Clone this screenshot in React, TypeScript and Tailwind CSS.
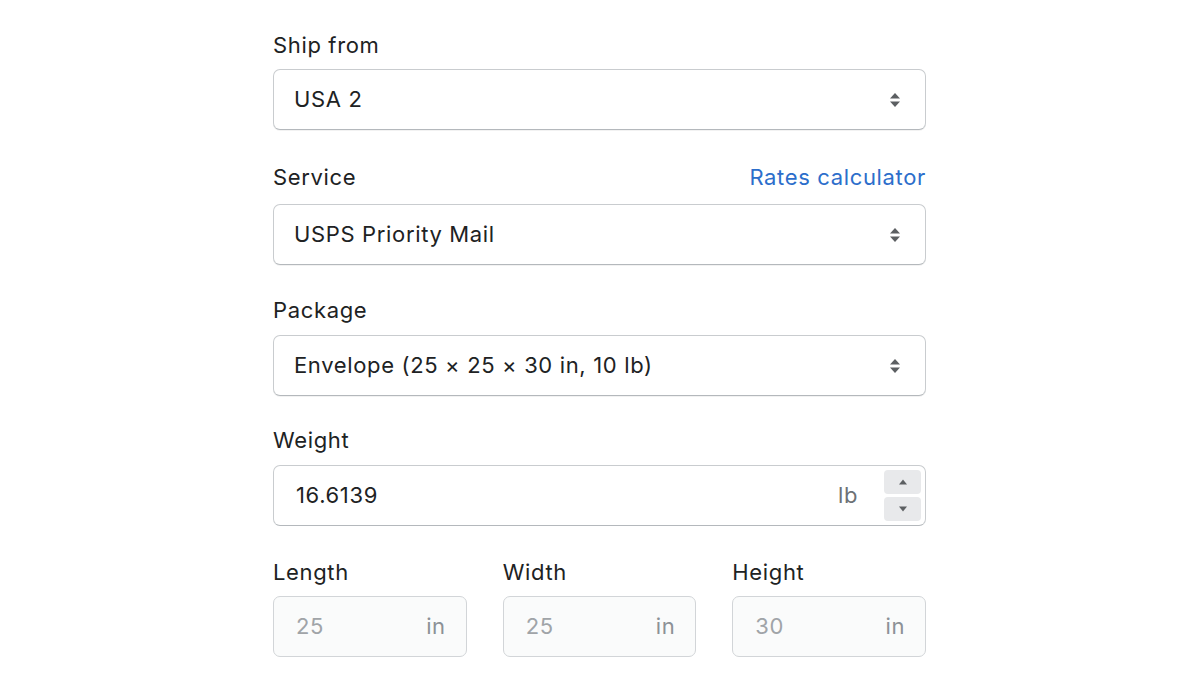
import React from 'react';

const font = { fontFamily: 'Inter, "Noto Sans", sans-serif' };

function SelectArrows() {
  return (
    <svg width="12" height="18" viewBox="0 0 12 18" className="shrink-0">
      <path d="M6 2 L11 7.5 L1 7.5 Z" fill="#5c5f62" />
      <path d="M6 16 L11 10.5 L1 10.5 Z" fill="#5c5f62" />
    </svg>
  );
}

function Label({ children }: { children: React.ReactNode }) {
  return <div className="text-[22px] leading-[30px] tracking-[0.65px] text-[#202223]">{children}</div>;
}

function Select({ value, className }: { value: string; className: string }) {
  return (
    <div className={`${className} h-[61px] rounded-[7px] border border-[#c9cccf] border-b-[#b4b8bc] bg-white flex items-center justify-between pl-5 pr-6 shadow-[0_1px_0_rgba(0,0,0,0.05)]`}>
      <span className="text-[22px] tracking-[0.65px] text-[#202223]">{value}</span>
      <SelectArrows />
    </div>
  );
}

function Spinner() {
  return (
    <div className="flex flex-col gap-[3px]">
      <div className="w-[37px] h-[24px] rounded-[4px] bg-[#e8e9eb] flex items-center justify-center">
        <svg width="10" height="6" viewBox="0 0 10 6">
          <path d="M5 0.5 L9 5.5 L1 5.5 Z" fill="#5c5f62" />
        </svg>
      </div>
      <div className="w-[37px] h-[24px] rounded-[4px] bg-[#e8e9eb] flex items-center justify-center">
        <svg width="10" height="6" viewBox="0 0 10 6">
          <path d="M5 5.5 L9 0.5 L1 0.5 Z" fill="#5c5f62" />
        </svg>
      </div>
    </div>
  );
}

function DimField({ label, value }: { label: string; value: string }) {
  return (
    <div className="flex-1">
      <Label>{label}</Label>
      <div className="mt-[9px] h-[61px] rounded-[7px] border border-[#d2d5d8] bg-[#fafbfb] flex items-center justify-between pl-[22px] pr-5">
        <span className="text-[22px] tracking-[0.6px] text-[#a0a4a8]">{value}</span>
        <span className="text-[22px] tracking-[0.6px] text-[#8c9196]">in</span>
      </div>
    </div>
  );
}

export default function App() {
  return (
    <div className="min-h-screen bg-white" style={font}>
      <div className="w-[653px] ml-[273px] pt-[30px] flex flex-col">
        <div>
          <Label>Ship from</Label>
          <Select value="USA 2" className="mt-[9px]" />
        </div>

        <div className="mt-[32px]">
          <div className="flex items-center justify-between">
            <Label>Service</Label>
            <span className="text-[22px] leading-[30px] tracking-[0.65px] text-[#2c6ecb]">Rates calculator</span>
          </div>
          <Select value="USPS Priority Mail" className="mt-[12px]" />
        </div>

        <div className="mt-[30px]">
          <Label>Package</Label>
          <Select value="Envelope (25 × 25 × 30 in, 10 lb)" className="mt-[10px]" />
        </div>

        <div className="mt-[29px]">
          <Label>Weight</Label>
          <div className="mt-[10px] h-[61px] rounded-[7px] border border-[#c9cccf] border-b-[#b4b8bc] bg-white flex items-center pl-[22px] pr-1">
            <span className="flex-1 text-[22px] tracking-[0.65px] text-[#202223]">16.6139</span>
            <span className="text-[22px] tracking-[0.6px] text-[#6d7175] mr-[26px]">lb</span>
            <Spinner />
          </div>
        </div>

        <div className="mt-[31px] flex gap-[36px]">
          <DimField label="Length" value="25" />
          <DimField label="Width" value="25" />
          <DimField label="Height" value="30" />
        </div>
      </div>
    </div>
  );
}
